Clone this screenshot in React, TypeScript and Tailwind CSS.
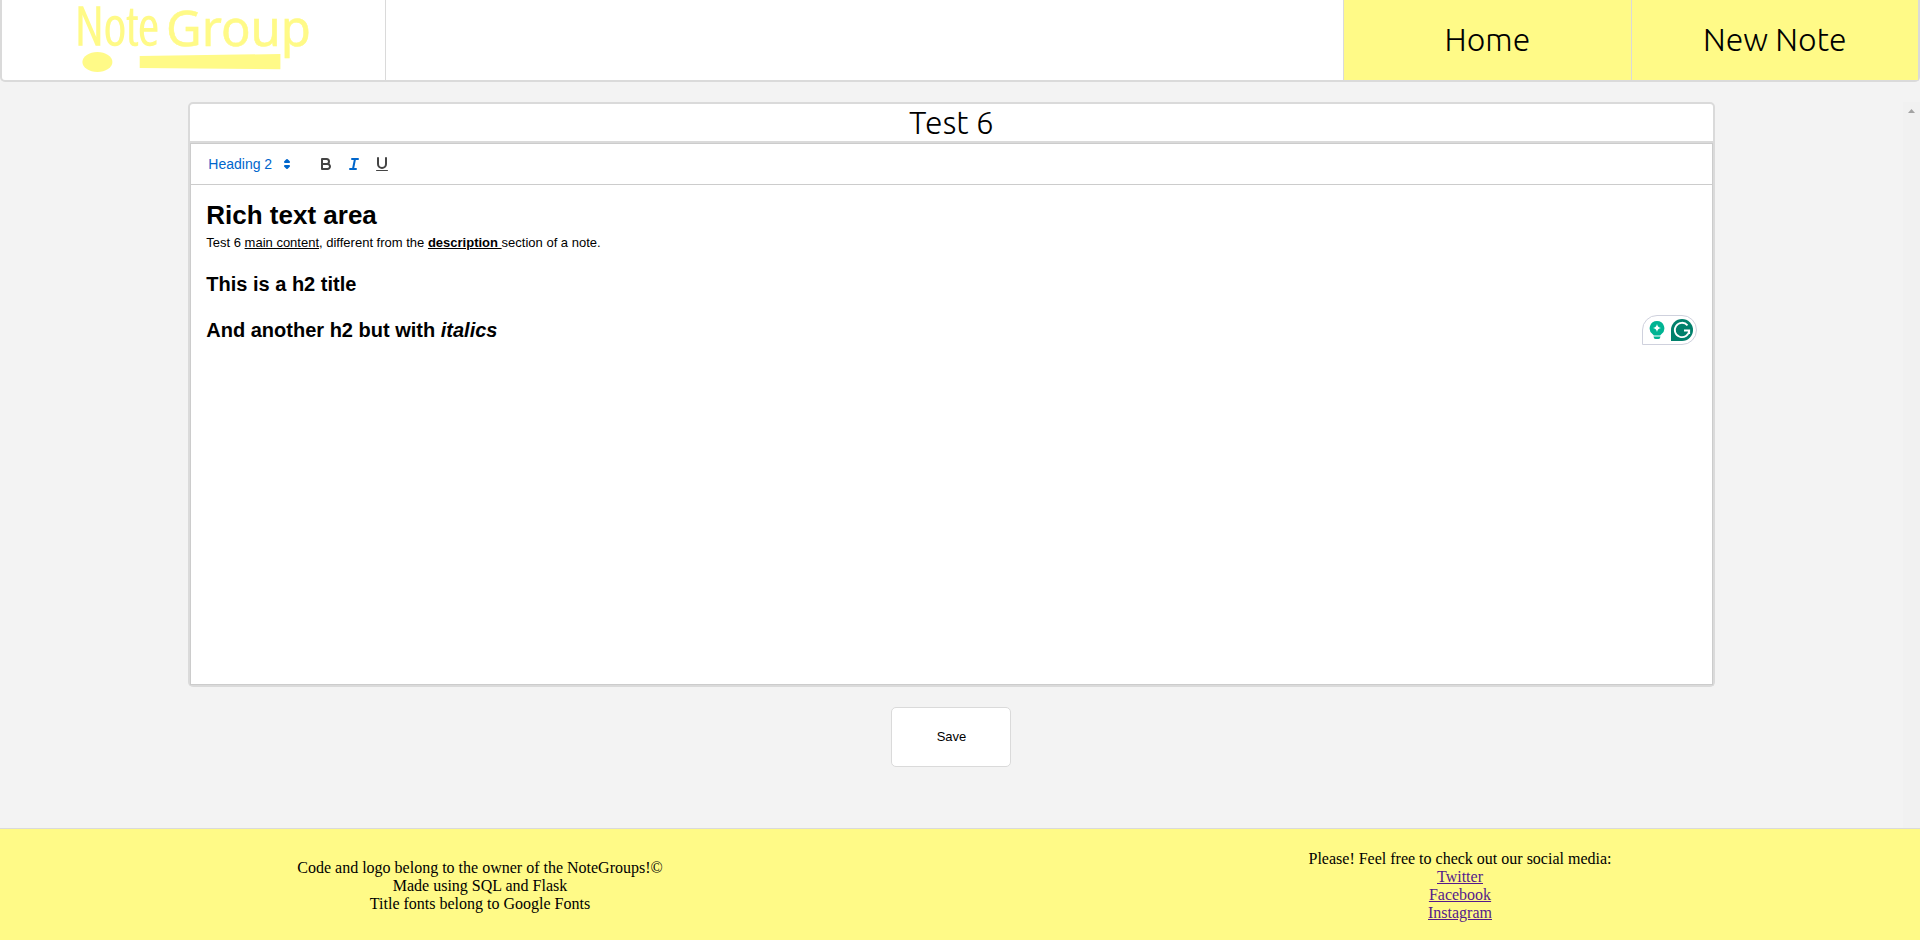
import React from "react";

const icon = "h-[18px] w-[18px] fill-none stroke-2 [stroke-linecap:round] [stroke-linejoin:round]";

function Logo() {
  return (
    <svg viewBox="0 0 240 80" className="h-[80px] w-[240px] overflow-visible fill-[#fffa87]" role="img" aria-label="Note Group">
      <text x="1" y="45" className="stroke-[#fffa87] stroke-[1.500] font-['Open_Sans_Condensed_Light','Roboto_Condensed',sans-serif] text-[54px] font-light">
        Note
      </text>
      <text x="92" y="46" className="stroke-[#fffa87] stroke-[0.500] font-['Noto_Sans','Open_Sans',sans-serif] text-[49px] font-normal">
        Group
      </text>
      <ellipse cx="23.4" cy="62" rx="15" ry="10" />
      <path d="M65.700 56 206.400 54V69.300L65.700 68Z" />
    </svg>
  );
}

function NavLink({ href, children }: { href: string; children: React.ReactNode }) {
  return (
    <a
      href={href}
      className="flex w-1/2 items-center justify-center border-l border-[#dadada] bg-[#fffa87] pb-[2px] font-[Ubuntu,'Open_Sans',sans-serif] text-[32px] font-light text-black"
    >
      {children}
    </a>
  );
}

function Header() {
  return (
    <header className="flex h-[82px] shrink-0 rounded-b-[5px] border-2 border-t-0 border-[#dadada] bg-white">
      <div className="flex w-1/5 justify-center">
        <Logo />
      </div>
      <div className="flex-1 border-l border-[#dadada]" />
      <nav className="flex w-3/10">
        <NavLink href="#home">Home</NavLink>
        <NavLink href="#new">New Note</NavLink>
      </nav>
    </header>
  );
}

function Toolbar() {
  return (
    <div className="flex border-b border-[#ccc] p-2 text-[#444]">
      <div className="relative mr-4 h-6 w-[97px] text-[#06c]">
        <select
          aria-label="Text style"
          defaultValue="Heading 2"
          className="h-6 w-full appearance-none bg-transparent pl-[9px] text-sm font-medium outline-none"
        >
          <option>Heading 1</option>
          <option>Heading 2</option>
          <option>Normal</option>
        </select>
        <svg viewBox="0 0 18 18" className={icon + " pointer-events-none absolute top-[3px] right-0 stroke-current"}>
          <polygon points="7 11 9 13 11 11 7 11" />
          <polygon points="7 7 9 5 11 7 7 7" />
        </svg>
      </div>
      <button type="button" aria-label="Bold" className="flex h-6 w-7 items-center justify-center">
        <svg viewBox="0 0 18 18" className={icon + " stroke-current"}>
          <path d="M5,4H9.5A2.5,2.5,0,0,1,12,6.5v0A2.5,2.5,0,0,1,9.5,9H5V4Z" />
          <path d="M5,9h5.5A2.5,2.5,0,0,1,13,11.5v0A2.5,2.5,0,0,1,10.5,14H5V9Z" />
        </svg>
      </button>
      <button type="button" aria-label="Italic" className="flex h-6 w-7 items-center justify-center text-[#06c]">
        <svg viewBox="0 0 18 18" className={icon + " stroke-current"}>
          <path d="M7 4H13M5 14H11M8 14 10 4" />
        </svg>
      </button>
      <button type="button" aria-label="Underline" className="flex h-6 w-7 items-center justify-center">
        <svg viewBox="0 0 18 18" className={icon + " stroke-current"}>
          <path d="M5,3V9a4.012,4.012,0,0,0,4,4H9a4.012,4.012,0,0,0,4-4V3" />
          <rect x="3" y="15" width="12" height="1" rx="0.5" className="fill-current stroke-none" />
        </svg>
      </button>
    </div>
  );
}

function WritingBadge() {
  return (
    <div className="absolute top-[130px] right-[15px] flex h-[30px] w-[55px] items-center gap-[6px] rounded-[15px] rounded-bl-none border border-[#cfd1dd] bg-white pl-[6px]">
      <svg viewBox="0 0 16 20" className="h-5 w-4">
        <path d="M8 1a7.300 7.300 0 0 1 4.300 13.200q-.9.700-1.100 1.300H4.800q-.2-.6-1.100-1.300A7.300 7.300 0 0 1 8 1Z" className="fill-[#00b493]" />
        <path d="M8 4q.6 3.400 4 4-3.400.6-4 4-.6-3.400-4-4 3.400-.6 4-4Z" className="fill-white" />
        <path d="M4.500 16.500h7q-.3 2.500-2 2.500h-3q-1.700 0-2-2.500Z" className="fill-[#00b493]" />
      </svg>
      <svg viewBox="0 0 22 22" className="h-[22px] w-[22px]">
        <path d="M11 0a11 11 0 0 1 0 22H0V11A11 11 0 0 1 11 0Z" className="fill-[#00806b]" />
        <path d="M16.500 6.300A7.200 7.200 0 1 0 18.200 11.500H13M18.200 11.500V15" className="fill-none stroke-white stroke-[1.800]" />
      </svg>
    </div>
  );
}

function Editor() {
  return (
    <form className="mx-auto flex w-[calc(80%+4px)] flex-col" onSubmit={(e) => e.preventDefault()}>
      <input
        aria-label="Note title"
        defaultValue="Test 6"
        className="h-[41px] w-full rounded-t-[5px] border-2 border-[#dadada] bg-white pb-[2px] text-center font-[Ubuntu,'Open_Sans',sans-serif] text-[32px] font-light text-black outline-none"
      />
      <div className="rounded-b-[5px] border-2 border-t-0 border-[#dadada] bg-white">
        <div className="border border-[#ccc]">
          <Toolbar />
          <div className="relative h-[499px] px-[15px] py-3 text-[13px] leading-[18px] text-black">
            <h1 className="text-[26px] leading-[37px] font-bold">Rich text area</h1>
            <p>
              Test 6 <u>main content</u>, different from the{" "}
              <b>
                <u>description </u>
              </b>
              section of a note.
            </p>
            <h2 className="mt-[18px] text-[20px] leading-7 font-bold">This is a h2 title</h2>
            <h2 className="mt-[18px] text-[20px] leading-7 font-bold">
              And another h2 but with <i>italics</i>
            </h2>
            <WritingBadge />
          </div>
        </div>
      </div>
      <button className="mt-5 h-[60px] w-[120px] self-center rounded-[5px] border border-[#dadada] bg-white text-[13px] text-black">
        Save
      </button>
    </form>
  );
}

function Footer() {
  return (
    <footer className="flex shrink-0 items-center border-t border-[#dadada] bg-[#fffa87] pt-[21px] pb-[18px] text-center font-['Liberation_Serif',serif] text-base leading-[18px] text-black">
      <div className="w-1/2">
        <p>Code and logo belong to the owner of the NoteGroups!©</p>
        <p>Made using SQL and Flask</p>
        <p>Title fonts belong to Google Fonts</p>
      </div>
      <ul className="w-1/2 pl-10">
        <li>Please! Feel free to check out our social media:</li>
        <li><a href="#twitter" className="text-[#551a8b] underline">Twitter</a></li>
        <li><a href="#facebook" className="text-[#551a8b] underline">Facebook</a></li>
        <li><a href="#instagram" className="text-[#551a8b] underline">Instagram</a></li>
      </ul>
    </footer>
  );
}

export default function App() {
  return (
    <div className="flex min-h-screen flex-col bg-[#f3f3f3] font-['Liberation_Sans',Arial,sans-serif]">
      <Header />
      <main className="mt-5 flex flex-1">
        <div className="flex-1">
          <Editor />
        </div>
        <div className="flex w-[17px] justify-center bg-[#f1f1f1] pt-[7px]">
          <svg viewBox="0 0 7 4" className="h-1 w-[7px] fill-[#a3a3a3]">
            <path d="M0 4 3.500 0 7 4Z" />
          </svg>
        </div>
      </main>
      <Footer />
    </div>
  );
}
